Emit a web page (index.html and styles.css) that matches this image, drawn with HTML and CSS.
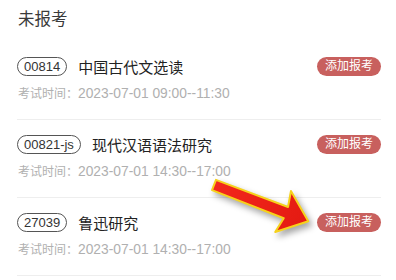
FILE: index.html
```html
<!DOCTYPE html>
<html lang="zh">
<head>
<meta charset="utf-8">
<link rel="stylesheet" href="styles.css">
</head>
<body>
<div class="page">
  <h2 class="title">未报考</h2>
  <ul class="list">
    <li class="row">
      <div class="line1">
        <span class="code">00814</span>
        <span class="name">中国古代文选读</span>
        <button class="add">添加报考</button>
      </div>
      <div class="line2"><span class="label">考试时间：</span><span class="time">2023-07-01 09:00--11:30</span></div>
    </li>
    <li class="row">
      <div class="line1">
        <span class="code">00821-js</span>
        <span class="name">现代汉语语法研究</span>
        <button class="add">添加报考</button>
      </div>
      <div class="line2"><span class="label">考试时间：</span><span class="time">2023-07-01 14:30--17:00</span></div>
    </li>
    <li class="row">
      <div class="line1">
        <span class="code">27039</span>
        <span class="name">鲁迅研究</span>
        <button class="add">添加报考</button>
      </div>
      <div class="line2"><span class="label">考试时间：</span><span class="time">2023-07-01 14:30--17:00</span></div>
    </li>
  </ul>
  <svg class="arrow" width="396" height="280" viewBox="0 0 396 280">
    <defs>
      <linearGradient id="g" x1="0" y1="0" x2="1" y2="0">
        <stop offset="0" stop-color="#f2281c"/>
        <stop offset="1" stop-color="#e41a12"/>
      </linearGradient>
    </defs>
    <g transform="translate(214 185) rotate(21)">
      <polygon points="0,-5.5 77,-6 74,-22 101,0 74,22 77,6 0,5.5" fill="url(#g)" stroke="#f6d21c" stroke-width="2" stroke-linejoin="round"/>
    </g>
  </svg>
</div>
</body>
</html>
```
FILE: styles.css
```css
* { box-sizing: border-box; }
html, body { margin: 0; padding: 0; background: #fff; }
body { font-family: "Liberation Sans", "Noto Sans CJK SC", sans-serif; }
.page { position: relative; width: 396px; height: 280px; padding: 0 15px 0 17px; overflow: hidden; }
.title { margin: 0 0 12px 1px; padding-top: 8px; font-size: 16.5px; line-height: 22px; font-weight: normal; color: #3a3a3a; }
.list { list-style: none; margin: 0; padding: 0; }
.row { padding: 14px 0 17px 0; border-bottom: 1px solid #eeeeee; }
.line1 { display: flex; align-items: center; height: 20px; }
.code { display: inline-block; height: 19px; line-height: 17px; padding: 0 6px; border: 1px solid #555; border-radius: 10px; font-size: 13px; color: #333; }
.name { margin-left: 11px; font-size: 15px; color: #222; }
.add { margin-left: auto; height: 19px; padding: 0 8px; border: 0; border-radius: 10px; background: #c8605e; color: #fff; font-family: inherit; font-size: 12px; line-height: 19px; }
.line2 { margin-top: 8px; height: 18px; line-height: 18px; color: #b0b0b0; padding-left: 1px; }
.label { font-size: 12px; }
.time { font-size: 13.8px; }
.arrow { position: absolute; left: 0; top: 0; filter: drop-shadow(3px 4px 3px rgba(0,0,0,0.35)); }
```
